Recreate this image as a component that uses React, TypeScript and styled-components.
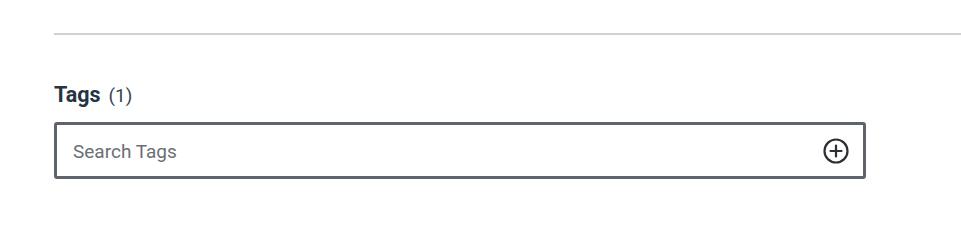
import styled, { createGlobalStyle } from "styled-components";

const GlobalStyle = createGlobalStyle`
    body {
        margin: 0;
        background: #ffffff;
        font-family: Roboto, "Liberation Sans", sans-serif;
    }
`;

const Page = styled.div`
    padding: 33px 0 0 54px;
`;

const Divider = styled.hr`
    margin: 0;
    border: none;
    height: 2px;
    background: #d0d0d4;
`;

const Section = styled.section`
    padding-top: 47px;
    width: 812px;
`;

const Label = styled.div`
    display: flex;
    align-items: baseline;
    gap: 8px;
    height: 24px;
    margin-bottom: 16px;
`;

const Title = styled.span`
    font-size: 21.5px;
    font-weight: 700;
    color: #263442;
`;

const Count = styled.span`
    font-size: 19px;
    color: #3a4555;
`;

const SearchBox = styled.div`
    display: flex;
    align-items: center;
    height: 57px;
    box-sizing: border-box;
    border: 3px solid #5f636a;
    border-radius: 3px;
    padding: 1px 13px 0 16px;
`;

const SearchInput = styled.input`
    flex: 1;
    border: none;
    outline: none;
    background: transparent;
    font-family: Roboto, "Liberation Sans", sans-serif;
    font-size: 19px;
    color: #333;
    padding: 0;

    &::placeholder {
        color: #6a6e75;
    }
`;

const AddButton = styled.button`
    display: flex;
    border: none;
    background: none;
    padding: 0;
    cursor: pointer;
`;

function PlusCircle() {
    return (
        <svg width="28" height="28" viewBox="0 0 28 28" fill="none" stroke="#2b2f36" strokeWidth="2.2">
            <circle cx="14" cy="14" r="11.5" />
            <path d="M14 8.5v11M8.5 14h11" strokeLinecap="round" />
        </svg>
    );
}

function App() {
    return (
        <Page>
            <GlobalStyle />
            <Divider />
            <Section>
                <Label>
                    <Title>Tags</Title>
                    <Count>(1)</Count>
                </Label>
                <SearchBox>
                    <SearchInput placeholder="Search Tags" />
                    <AddButton aria-label="Add tag">
                        <PlusCircle />
                    </AddButton>
                </SearchBox>
            </Section>
        </Page>
    );
}

export default App;
